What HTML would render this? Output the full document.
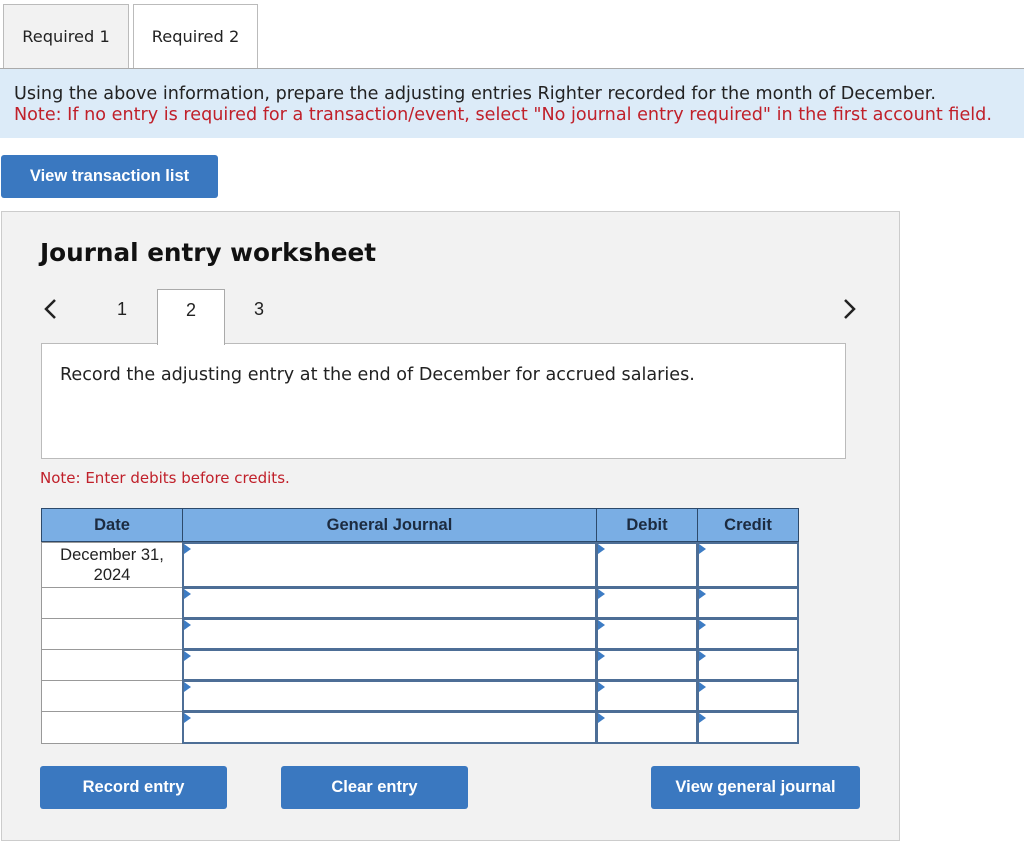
<!DOCTYPE html>
<html><head><meta charset="utf-8"><style>
*{box-sizing:border-box;margin:0;padding:0}
body{width:1024px;height:837px;background:#fff;position:relative;overflow:hidden;font-family:"DejaVu Sans",Verdana,sans-serif;color:#222}
.a{position:absolute}
.tab{position:absolute;top:4px;height:65px;border:1px solid #bbb;border-bottom:none;font-size:16.2px;line-height:64px;text-align:center}
.btn{position:absolute;background:#3a78c0;color:#fff;font-family:"Liberation Sans",Arial,sans-serif;font-weight:bold;font-size:16.5px;text-align:center;border-radius:3px}
.th{position:absolute;top:508px;height:34px;background:#7aaee4;border:1px solid #2d4a6b;font-family:"Liberation Sans",Arial,sans-serif;font-weight:bold;font-size:16.5px;color:#1c2b40;text-align:center;line-height:32px}
.dc{position:absolute;left:41px;width:142px;background:#fff;border:1px solid #999;font-family:"Liberation Sans",Arial,sans-serif;font-size:16.5px;text-align:center;line-height:20px;padding-top:2px}
.ic{position:absolute;background:#fff;border:2px solid #4d6e96}
.ic:before{content:"";position:absolute;left:0;top:0;border-left:7px solid #3d7cc4;border-top:5px solid transparent;border-bottom:5px solid transparent}
</style></head><body>
<div class="tab" style="left:3px;width:126px;background:#f2f2f2">Required 1</div>
<div class="tab" style="left:133px;width:125px;background:#fff;height:66px">Required 2</div>
<div class="a" style="left:0;top:68px;width:1024px;height:70px;background:#dcebf8;border-top:1px solid #aaa"></div>
<div class="a" style="left:14px;top:84px;font-size:17.6px;color:#222;white-space:nowrap">Using the above information, prepare the adjusting entries Righter recorded for the month of December.</div>
<div class="a" style="left:14px;top:105px;font-size:17.6px;color:#c0202a;white-space:nowrap">Note: If no entry is required for a transaction/event, select "No journal entry required" in the first account field.</div>
<div class="btn" style="left:1px;top:155px;width:217px;height:43px;line-height:42px">View transaction list</div>
<div class="a" style="left:1px;top:211px;width:899px;height:630px;background:#f2f2f2;border:1px solid #ccc"></div>
<div class="a" style="left:40px;top:238px;font-size:24.7px;font-weight:bold;color:#111">Journal entry worksheet</div>
<svg class="a" style="left:42px;top:298px" width="16" height="22"><path d="M13 2 L4 11 L13 20" stroke="#222" stroke-width="2.5" fill="none"/></svg>
<svg class="a" style="left:842px;top:298px" width="16" height="22"><path d="M3 2 L12 11 L3 20" stroke="#222" stroke-width="2.5" fill="none"/></svg>
<div class="a" style="left:117px;top:299px;font-family:'Liberation Sans',Arial,sans-serif;font-size:18px">1</div>
<div class="a" style="left:41px;top:343px;width:805px;height:116px;background:#fff;border:1px solid #bbb"></div>
<div class="a" style="left:157px;top:289px;width:68px;height:56px;background:#fff;border:1px solid #aaa;border-bottom:none;text-align:center;line-height:40px;font-family:'Liberation Sans',Arial,sans-serif;font-size:18px">2</div>
<div class="a" style="left:254px;top:299px;font-family:'Liberation Sans',Arial,sans-serif;font-size:18px">3</div>
<div class="a" style="left:60px;top:365px;font-size:17.6px;white-space:nowrap">Record the adjusting entry at the end of December for accrued salaries.</div>
<div class="a" style="left:40px;top:469px;font-size:15px;color:#c0202a">Note: Enter debits before credits.</div>
<div class="th" style="left:41px;width:142px">Date</div>
<div class="th" style="left:182px;width:415px">General Journal</div>
<div class="th" style="left:596px;width:102px">Debit</div>
<div class="th" style="left:697px;width:102px">Credit</div>
<div class="dc" style="top:542px;height:46px">December 31,<br>2024</div>
<div class="dc" style="top:587px;height:32px"></div>
<div class="dc" style="top:618px;height:32px"></div>
<div class="dc" style="top:649px;height:32px"></div>
<div class="dc" style="top:680px;height:32px"></div>
<div class="dc" style="top:711px;height:33px"></div>
<div class="ic" style="left:182px;top:542px;width:415px;height:46px"></div>
<div class="ic" style="left:596px;top:542px;width:102px;height:46px"></div>
<div class="ic" style="left:697px;top:542px;width:102px;height:46px"></div>
<div class="ic" style="left:182px;top:587px;width:415px;height:32px"></div>
<div class="ic" style="left:596px;top:587px;width:102px;height:32px"></div>
<div class="ic" style="left:697px;top:587px;width:102px;height:32px"></div>
<div class="ic" style="left:182px;top:618px;width:415px;height:32px"></div>
<div class="ic" style="left:596px;top:618px;width:102px;height:32px"></div>
<div class="ic" style="left:697px;top:618px;width:102px;height:32px"></div>
<div class="ic" style="left:182px;top:649px;width:415px;height:32px"></div>
<div class="ic" style="left:596px;top:649px;width:102px;height:32px"></div>
<div class="ic" style="left:697px;top:649px;width:102px;height:32px"></div>
<div class="ic" style="left:182px;top:680px;width:415px;height:32px"></div>
<div class="ic" style="left:596px;top:680px;width:102px;height:32px"></div>
<div class="ic" style="left:697px;top:680px;width:102px;height:32px"></div>
<div class="ic" style="left:182px;top:711px;width:415px;height:33px"></div>
<div class="ic" style="left:596px;top:711px;width:102px;height:33px"></div>
<div class="ic" style="left:697px;top:711px;width:102px;height:33px"></div>
<div class="btn" style="left:40px;top:766px;width:187px;height:43px;line-height:42px">Record entry</div>
<div class="btn" style="left:281px;top:766px;width:187px;height:43px;line-height:42px">Clear entry</div>
<div class="btn" style="left:651px;top:766px;width:209px;height:43px;line-height:42px">View general journal</div>
</body></html>
